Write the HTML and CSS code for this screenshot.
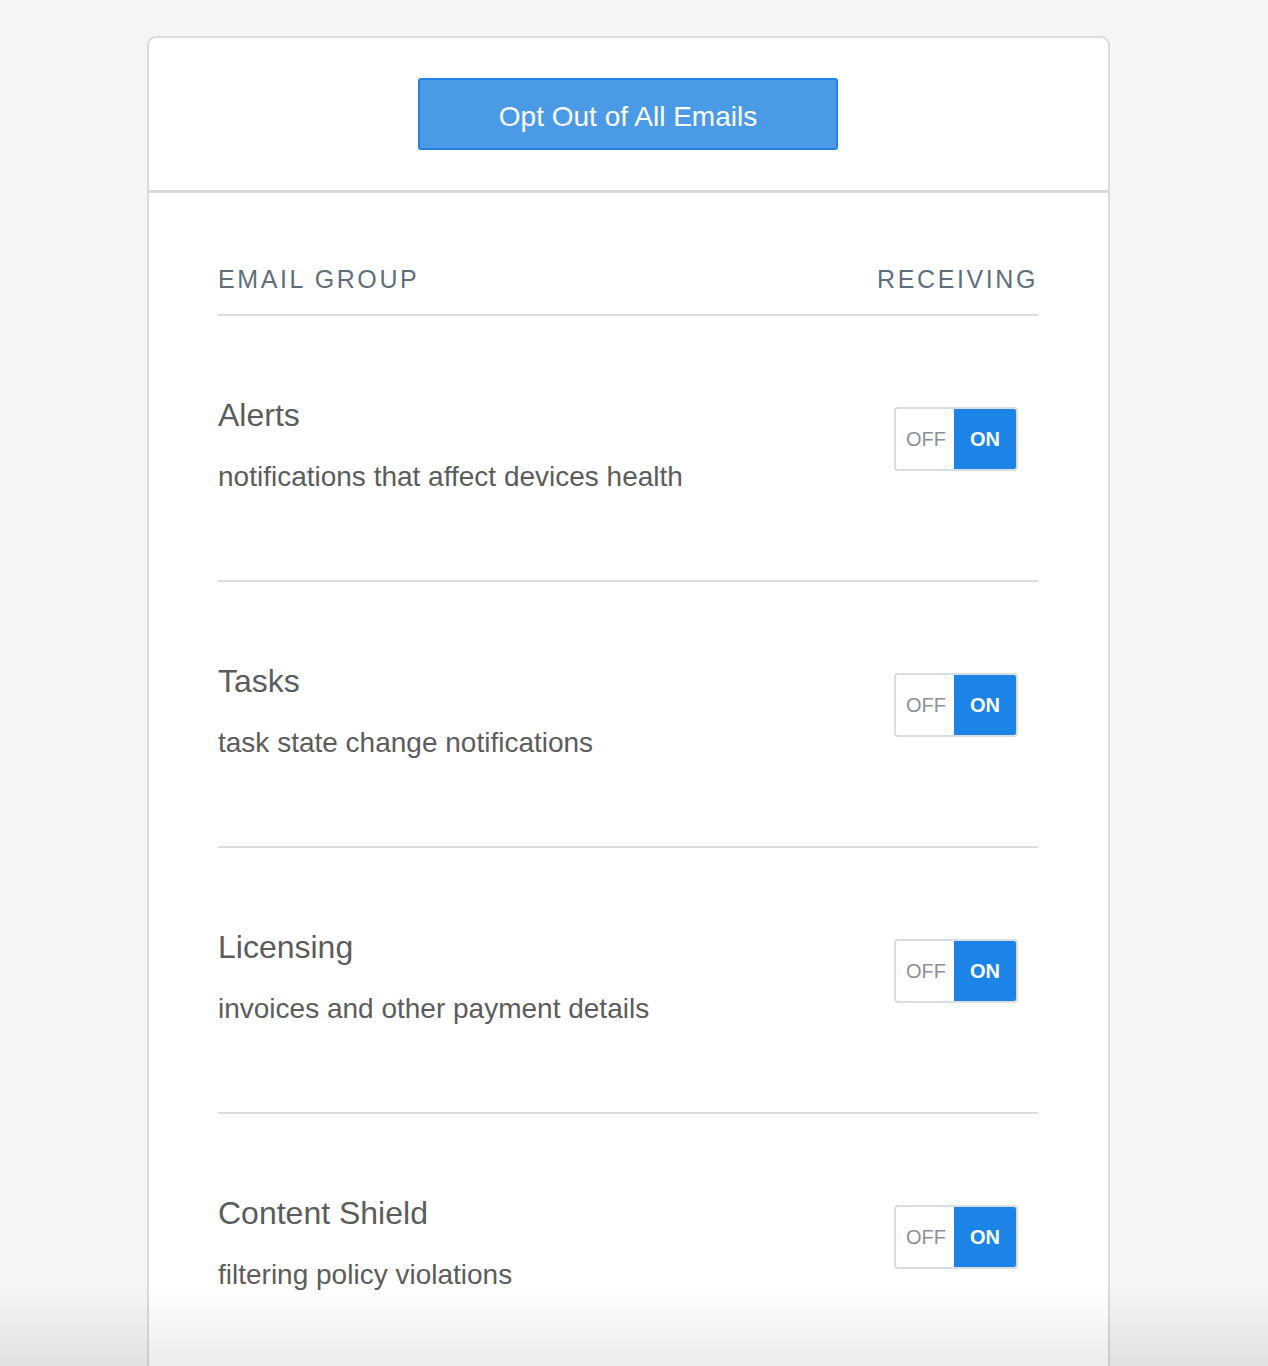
FILE: index.html
```html
<!DOCTYPE html>
<html>
<head>
<meta charset="utf-8">
<link rel="stylesheet" href="styles.css">
</head>
<body>
<div class="card">
  <div class="card-head">
    <button class="opt-out">Opt Out of All Emails</button>
  </div>
  <div class="card-body">
    <div class="table-head">
      <span>Email Group</span>
      <span>Receiving</span>
    </div>
    <div class="row">
      <div class="info">
        <div class="title">Alerts</div>
        <div class="desc">notifications that affect devices health</div>
      </div>
      <div class="toggle"><span class="off">OFF</span><span class="on">ON</span></div>
    </div>
    <div class="row">
      <div class="info">
        <div class="title">Tasks</div>
        <div class="desc">task state change notifications</div>
      </div>
      <div class="toggle"><span class="off">OFF</span><span class="on">ON</span></div>
    </div>
    <div class="row">
      <div class="info">
        <div class="title">Licensing</div>
        <div class="desc">invoices and other payment details</div>
      </div>
      <div class="toggle"><span class="off">OFF</span><span class="on">ON</span></div>
    </div>
    <div class="row">
      <div class="info">
        <div class="title">Content Shield</div>
        <div class="desc">filtering policy violations</div>
      </div>
      <div class="toggle"><span class="off">OFF</span><span class="on">ON</span></div>
    </div>
  </div>
</div>
<div class="fade"></div>
</body>
</html>
```

FILE: styles.css
```css
html, body {
  margin: 0;
  padding: 0;
  background: #f5f5f5;
  font-family: "Liberation Sans", Arial, Helvetica, sans-serif;
}
body {
  padding-top: 36px;
}
.card {
  width: 959px;
  margin-left: 147px;
  background: #fff;
  border: 2px solid #dadada;
  border-radius: 9px;
  min-height: 1400px;
}
.card-head {
  display: flex;
  justify-content: center;
  padding: 40px 0 40px;
  border-bottom: 3px solid #d9d9d9;
}
.opt-out {
  width: 420px;
  height: 72px;
  background: #4a9ae6;
  border: 2px solid #2383e2;
  border-radius: 3px;
  color: #fff;
  font-family: "Liberation Sans", Arial, sans-serif;
  font-size: 28px;
  padding: 6px 0 0;
  margin-left: -1px;
}
.card-body {
  padding: 0 70px 0 69px;
}
.table-head {
  display: flex;
  justify-content: space-between;
  padding-top: 71px;
  padding-bottom: 20px;
  border-bottom: 2px solid #dcdcdc;
  color: #5f6e7b;
  font-size: 25px;
  line-height: 30px;
  letter-spacing: 2.6px;
  text-transform: uppercase;
}
.row {
  display: flex;
  justify-content: space-between;
  align-items: flex-start;
  padding: 80px 20px 87px 0;
  border-bottom: 2px solid #dcdcdc;
  color: #5c5c5c;
}
.title {
  font-size: 32px;
  line-height: 38px;
}
.desc {
  font-size: 28px;
  line-height: 33px;
  margin-top: 26px;
}
.toggle {
  display: flex;
  margin-top: 11px;
  width: 120px;
  height: 60px;
  border: 2px solid #dadde2;
  border-radius: 4px;
  overflow: hidden;
  font-size: 20px;
}
.toggle span {
  display: flex;
  align-items: center;
  justify-content: center;
}
.off {
  width: 56px;
  color: #8a8f99;
  padding-left: 2px;
}
.on {
  flex: 1;
  background: #1b84e6;
  color: #fff;
  font-weight: bold;
}
.fade {
  position: fixed;
  left: 0;
  right: 0;
  bottom: 0;
  height: 80px;
  background: linear-gradient(to bottom, rgba(0,0,0,0), rgba(0,0,0,0.075));
  pointer-events: none;
}
```
